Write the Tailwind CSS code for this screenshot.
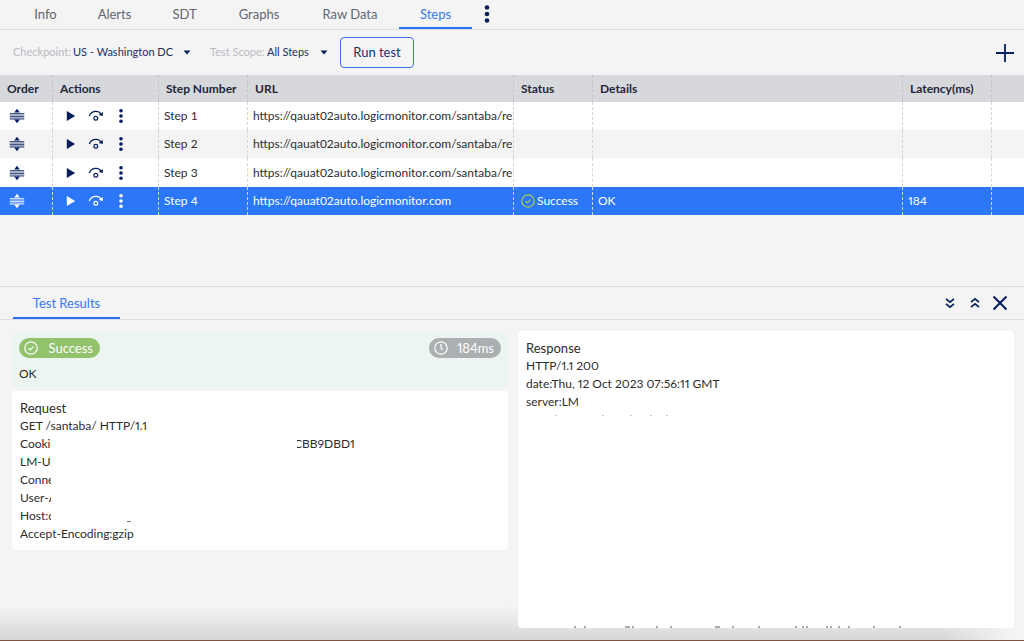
<!DOCTYPE html>
<html lang="en">
<head>
<meta charset="utf-8">
<meta name="viewport" content="width=device-width, initial-scale=1">
<title>Steps</title>
<script src="https://cdn.jsdelivr.net/npm/@tailwindcss/browser@4"></script>
</head>
<body class="flex min-h-screen flex-col bg-[#f4f4f4] font-[Lato,sans-serif] text-xs text-[#2d2d2d]">
<svg class="hidden" aria-hidden="true">
  <symbol id="order" viewBox="0 0 16 16"><path d="M8 .8L10.800 4.500H5.200zM8 15.200l2.800-3.700H5.200z" fill="currentColor"/><path d="M.8 5h14.400v6.500H.8z" fill="currentColor" opacity=".35"/><path d="M.8 5.500h14.400M.8 8.500h14.400M.8 11h14.400" stroke="currentColor" stroke-width="1" opacity=".6"/></symbol>
  <symbol id="play" viewBox="0 0 10 12"><path d="M.8 1l8.400 5-8.400 5z" fill="currentColor"/></symbol>
  <symbol id="over" viewBox="0 0 16 14"><path d="M1.300 7C3.500 1.500 10.500 1 13 5" fill="none" stroke="currentColor" stroke-width="1.300"/><path d="M14.800 3v4l-4.200-1z" fill="currentColor"/><circle cx="7.800" cy="9.300" r="1.900" fill="none" stroke="currentColor" stroke-width="1.200"/></symbol>
  <symbol id="dots" viewBox="0 0 6 18"><circle cx="3" cy="3.800" r="1.800" fill="currentColor"/><circle cx="3" cy="9" r="1.800" fill="currentColor"/><circle cx="3" cy="14.200" r="1.800" fill="currentColor"/></symbol>
  <symbol id="check" viewBox="0 0 14 14"><circle cx="7" cy="7" r="6.200" fill="none" stroke="currentColor" stroke-width="1.200"/><path d="M4.500 7.200l1.800 1.700 3.400-3.500" fill="none" stroke="currentColor" stroke-width="1.200"/></symbol>
</svg>

<nav class="flex h-[30px] items-stretch border-b border-[#d9dce3] pl-3.5 text-[13px] text-[#636573]">
  <button class="w-[63px]">Info</button>
  <button class="w-[75px]">Alerts</button>
  <button class="w-[65px]">SDT</button>
  <button class="w-[84px]">Graphs</button>
  <button class="w-[98px]">Raw Data</button>
  <button class="w-[73px] border-b-2 border-[#2b6ff5] pt-0.5 text-[#3b78f0]" aria-current="page">Steps</button>
  <button class="ml-2.5 pb-0.5 text-[#041e5c]" aria-label="More tabs"><svg class="h-5 w-2.5" viewBox="0 0 10 20" fill="currentColor"><circle cx="5" cy="3.500" r="2.300"/><circle cx="5" cy="10" r="2.300"/><circle cx="5" cy="16.500" r="2.300"/></svg></button>
</nav>

<div class="flex h-[45px] items-center px-[13px] text-[11px]">
  <label for="cp" class="w-[60px] whitespace-nowrap text-[#babbc3]">Checkpoint:</label>
  <div class="relative flex w-[118px] items-center">
    <select id="cp" class="w-full appearance-none text-[#1b2f6b]"><option>US - Washington DC</option></select>
    <svg class="pointer-events-none absolute right-0 h-[5px] w-2" viewBox="0 0 8 5"><path d="M.5.500h7L4 4.500z" fill="#041e5c"/></svg>
  </div>
  <label for="sc" class="ml-[19px] w-[57px] whitespace-nowrap text-[#babbc3]">Test Scope:</label>
  <div class="relative flex w-[61px] items-center">
    <select id="sc" class="w-full appearance-none text-[#1b2f6b]"><option>All Steps</option></select>
    <svg class="pointer-events-none absolute right-0 h-[5px] w-2" viewBox="0 0 8 5"><path d="M.5.500h7L4 4.500z" fill="#041e5c"/></svg>
  </div>
  <button class="ml-3 h-[31px] w-[74px] rounded border border-[#3b70e8] text-[13px] text-[#1b2f6b]">Run test</button>
  <button class="ml-auto -mr-1 text-[#041e5c]" aria-label="Add step"><svg class="size-5" viewBox="0 0 20 20"><path d="M10 1v18M1 10h18" stroke="currentColor" stroke-width="1.800"/></svg></button>
</div>

<table class="w-full table-fixed border-separate border-spacing-0 text-left text-xs whitespace-nowrap [&_td]:overflow-hidden [&_td]:border-r [&_td]:border-dashed [&_td]:border-[#d3d4d8] [&_td]:p-0 [&_td]:pl-[5px] [&_td:last-child]:border-r-0 [&_th]:border-r [&_th]:border-dashed [&_th]:border-[#c3c4c9] [&_th]:p-0 [&_th]:pl-[7px] [&_th:last-child]:border-r-0">
  <colgroup><col class="w-[53px]"><col class="w-[106px]"><col class="w-[89px]"><col class="w-[266px]"><col class="w-[79px]"><col><col class="w-[89px]"><col class="w-8"></colgroup>
  <thead>
    <tr class="h-[27px] bg-[#d7d8db] font-bold text-[#22263b]"><th>Order</th><th>Actions</th><th>Step Number</th><th>URL</th><th>Status</th><th>Details</th><th>Latency(ms)</th><th></th></tr>
  </thead>
  <tbody>
    <tr class="h-7 bg-white">
      <td><button class="ml-1 block text-[#041e5c]" aria-label="Reorder step 1"><svg class="size-4"><use href="#order"/></svg></button></td>
      <td><div class="flex items-center pl-2 text-[#041e5c]"><button aria-label="Run step 1"><svg class="h-3 w-2.5"><use href="#play"/></svg></button><button class="ml-3" aria-label="Step over 1"><svg class="h-3.5 w-4"><use href="#over"/></svg></button><button class="ml-3.5" aria-label="More for step 1"><svg class="h-[18px] w-1.5"><use href="#dots"/></svg></button></div></td>
      <td>Step 1</td><td>https://qauat02auto.logicmonitor.com/santaba/rest</td><td></td><td></td><td></td><td></td>
    </tr>
    <tr class="h-7">
      <td><button class="ml-1 block text-[#041e5c]" aria-label="Reorder step 2"><svg class="size-4"><use href="#order"/></svg></button></td>
      <td><div class="flex items-center pl-2 text-[#041e5c]"><button aria-label="Run step 2"><svg class="h-3 w-2.5"><use href="#play"/></svg></button><button class="ml-3" aria-label="Step over 2"><svg class="h-3.5 w-4"><use href="#over"/></svg></button><button class="ml-3.5" aria-label="More for step 2"><svg class="h-[18px] w-1.5"><use href="#dots"/></svg></button></div></td>
      <td>Step 2</td><td>https://qauat02auto.logicmonitor.com/santaba/rest</td><td></td><td></td><td></td><td></td>
    </tr>
    <tr class="h-[29px] bg-white">
      <td><button class="ml-1 block text-[#041e5c]" aria-label="Reorder step 3"><svg class="size-4"><use href="#order"/></svg></button></td>
      <td><div class="flex items-center pl-2 text-[#041e5c]"><button aria-label="Run step 3"><svg class="h-3 w-2.5"><use href="#play"/></svg></button><button class="ml-3" aria-label="Step over 3"><svg class="h-3.5 w-4"><use href="#over"/></svg></button><button class="ml-3.5" aria-label="More for step 3"><svg class="h-[18px] w-1.5"><use href="#dots"/></svg></button></div></td>
      <td>Step 3</td><td>https://qauat02auto.logicmonitor.com/santaba/rest</td><td></td><td></td><td></td><td></td>
    </tr>
    <tr class="h-7 bg-[#2b77f8] text-white">
      <td><button class="ml-1 block" aria-label="Reorder step 4"><svg class="size-4"><use href="#order"/></svg></button></td>
      <td><div class="flex items-center pl-2"><button aria-label="Run step 4"><svg class="h-3 w-2.5"><use href="#play"/></svg></button><button class="ml-3" aria-label="Step over 4"><svg class="h-3.5 w-4"><use href="#over"/></svg></button><button class="ml-3.5" aria-label="More for step 4"><svg class="h-[18px] w-1.5"><use href="#dots"/></svg></button></div></td>
      <td>Step 4</td><td>https://qauat02auto.logicmonitor.com</td>
      <td><div class="flex items-center gap-0.5 pl-0.5"><svg class="size-3.5 shrink-0 text-[#a5cc52]"><use href="#check"/></svg>Success</div></td>
      <td>OK</td><td class="proportional-nums">184</td><td></td>
    </tr>
  </tbody>
</table>

<header class="mt-[71px] flex h-[34px] items-stretch border-y border-[#dcdde6] pr-4 pl-[13px] text-[#041e5c]">
  <button class="w-[107px] border-b-2 border-[#2b6ff5] pt-1 text-[13px] text-[#3b78f0]">Test Results</button>
  <button class="ml-auto" aria-label="Collapse"><svg class="size-3" viewBox="0 0 12 12" fill="none" stroke="currentColor" stroke-width="1.700"><path d="M2 1.800l4 3.400 4-3.400M2 6.800l4 3.400 4-3.400"/></svg></button>
  <button class="ml-[13px]" aria-label="Expand"><svg class="size-3" viewBox="0 0 12 12" fill="none" stroke="currentColor" stroke-width="1.700"><path d="M2 5.200l4-3.400 4 3.400M2 10.200l4-3.400 4 3.400"/></svg></button>
  <button class="ml-[11px]" aria-label="Close"><svg class="size-4" viewBox="0 0 16 16"><path d="M1.500 1.500l13 13M14.500 1.500l-13 13" stroke="currentColor" stroke-width="2"/></svg></button>
</header>

<main class="grid grow grid-cols-2 gap-2.5 border-b border-[#7d5444] bg-[linear-gradient(to_right,transparent_92%,#f4f4f4_99%),linear-gradient(to_top,#d6d6d6,#f4f4f4_34px)] px-3 pt-[11px] pr-2.5 pb-3 leading-[18px] whitespace-nowrap proportional-nums">
  <div class="flex flex-col gap-[3px]">
    <section class="h-[57px] rounded bg-[#ecf5f0] px-[7px] pt-[7px]">
      <div class="flex justify-between text-[13px] text-white">
        <span class="flex h-5 w-[81px] items-center justify-between rounded-full bg-[#92c26b] pr-[7px] pl-[5px]"><svg class="size-3.5"><use href="#check"/></svg>Success</span>
        <span class="flex h-5 w-[72px] items-center justify-between rounded-full bg-[#aaafb2] pr-[7px] pl-[5px]"><svg class="size-3.5" viewBox="0 0 14 14" fill="none" stroke="currentColor" stroke-width="1.200"><circle cx="7" cy="7" r="6.200"/><path d="M7 3v4.200l2 1.600"/></svg>184ms</span>
      </div>
      <p class="mt-[7px]">OK</p>
    </section>
    <section class="rounded bg-white px-2 pt-2 pb-[7px]">
      <h2 class="text-[13px]">Request</h2>
      <p>GET /santaba/ HTTP/1.1</p>
      <div class="flex"><span class="w-[31px] overflow-hidden">Cookie:</span><span class="ml-[246px] flex overflow-hidden"><span class="flex w-[5px] justify-end overflow-hidden">C</span>BB9DBD1</span></div>
      <p class="w-[31px] overflow-hidden">LM-UA</p>
      <p class="w-[31px] overflow-hidden">Connection</p>
      <p class="w-[31px] overflow-hidden">User-Agent</p>
      <div class="flex items-end"><span class="w-[31px] overflow-hidden">Host:qauat</span><span class="mb-[3px] ml-[76px] h-px w-1 bg-[#777]"></span></div>
      <p>Accept-Encoding:gzip</p>
    </section>
  </div>
  <section class="flex flex-col rounded bg-white px-2 pt-2">
    <h2 class="text-[13px]">Response</h2>
    <p>HTTP/1.1 200</p>
    <p>date:Thu, 12 Oct 2023 07:56:11 GMT</p>
    <p>server:LM</p>
    <svg class="mt-1 h-0.5 w-[150px]" viewBox="0 0 150 2" aria-hidden="true"><path d="M29 .5h2M76 .5h2M104 .5h2M124 .5h2M140 .5h2" stroke="#ccc"/></svg>
    <svg class="mt-auto h-0.5 w-[400px]" viewBox="0 0 400 2" aria-hidden="true"><path d="M48 1h2M58 1h2M99 1h5M106 1h2M130 1h2M144 1h2M189 1h5M206 1h2M232 1h2M269 1h2M276 1h2M280 1h2M300 1h2M304 1h2M312 1h2M322 1h2M347 1h2M373 1h2" stroke="#aaa" stroke-width="2"/></svg>
  </section>
</main>
</body>
</html>
